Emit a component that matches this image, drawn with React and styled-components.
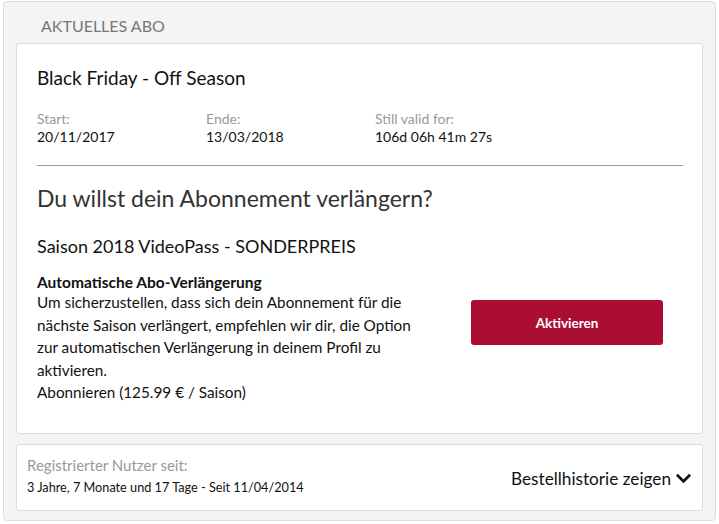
import styled, { createGlobalStyle } from "styled-components";
import { FaChevronDown } from "react-icons/fa";

const GlobalStyle = createGlobalStyle`
  * {
    box-sizing: border-box;
  }
  body {
    margin: 0;
    background: #fff;
    font-family: Lato, "Noto Sans", sans-serif;
    color: #111;
  }
`;

const Page = styled.div`
  padding: 1px 4px 4px 3px;
`;

const Panel = styled.section`
  width: 713px;
  background: #f4f4f4;
  border: 1px solid #dedede;
  border-radius: 4px;
  padding: 0 12px 9px 12px;
`;

const PanelTitle = styled.h2`
  margin: 0;
  height: 41px;
  padding: 14px 0 0 25px;
  font-size: 16px;
  font-weight: 400;
  color: #777;
  text-transform: uppercase;
`;

const Card = styled.div`
  background: #fff;
  border: 1px solid #dcdcdc;
  border-radius: 3px;
  padding: ${(p) => p.$padding || "20px"};
  & + & {
    margin-top: 10px;
  }
`;

const SubTitle = styled.h3`
  margin: 0;
  font-size: 19px;
  font-weight: 400;
  color: #111;
  line-height: 26px;
`;

const Dates = styled.div`
  display: flex;
  margin-top: 19px;
  padding-bottom: 19px;
  border-bottom: 1px solid #9a9a9a;
`;

const DateCol = styled.div`
  width: 169px;
  font-size: 14px;
  line-height: 18px;
`;

const Label = styled.div`
  color: #999;
`;

const Value = styled.div`
  color: #111;
`;

const Question = styled.h3`
  margin: 17px 0 0;
  font-size: 23px;
  font-weight: 400;
  color: #333;
  line-height: 30px;
`;

const Product = styled.h4`
  margin: 21px 0 0;
  font-size: 18px;
  font-weight: 400;
  color: #111;
  line-height: 24px;
`;

const Offer = styled.div`
  display: flex;
  align-items: flex-start;
  margin-top: 15px;
`;

const OfferText = styled.div`
  width: 385px;
  font-size: 15.3px;
  line-height: 22.5px;
  color: #111;
`;

const Strong = styled.div`
  font-size: 15.5px;
  font-weight: 700;
  line-height: 18px;
`;

const ButtonCol = styled.div`
  flex: 1;
  display: flex;
  padding: 27px 0 0 49px;
`;

const Button = styled.button`
  width: 192px;
  height: 45px;
  background: #ab0e33;
  color: #fff;
  border: none;
  border-radius: 3px;
  font-family: Lato, "Noto Sans", sans-serif;
  font-size: 13.5px;
  font-weight: 700;
  cursor: pointer;
`;

const FooterRow = styled.div`
  display: flex;
  align-items: center;
  justify-content: space-between;
`;

const Since = styled.div`
  color: #999;
  font-size: 15px;
  line-height: 20px;
`;

const SinceValue = styled.div`
  font-size: 12.7px;
  line-height: 20px;
  margin-top: 2px;
  color: #111;
`;

const Toggle = styled.button`
  display: flex;
  align-items: center;
  gap: 4px;
  background: none;
  border: none;
  padding: 0;
  margin-top: 6px;
  font-family: Lato, "Noto Sans", sans-serif;
  font-size: 17.2px;
  color: #111;
  cursor: pointer;
  svg {
    width: 17px;
    height: 17px;
  }
`;

export default function App() {
  return (
    <>
      <GlobalStyle />
      <Page>
        <Panel>
          <PanelTitle>Aktuelles Abo</PanelTitle>
          <Card $padding="21px 19px 29px 20px">
            <SubTitle>Black Friday - Off Season</SubTitle>
            <Dates>
              <DateCol>
                <Label>Start:</Label>
                <Value>20/11/2017</Value>
              </DateCol>
              <DateCol>
                <Label>Ende:</Label>
                <Value>13/03/2018</Value>
              </DateCol>
              <DateCol>
                <Label>Still valid for:</Label>
                <Value>106d 06h 41m 27s</Value>
              </DateCol>
            </Dates>
            <Question>Du willst dein Abonnement verlängern?</Question>
            <Product>Saison 2018 VideoPass - SONDERPREIS</Product>
            <Offer>
              <OfferText>
                <Strong>Automatische Abo-Verlängerung</Strong>
                Um sicherzustellen, dass sich dein Abonnement für die nächste
                Saison verlängert, empfehlen wir dir, die Option zur
                automatischen Verlängerung in deinem Profil zu aktivieren.
                <div>Abonnieren (125.99 € / Saison)</div>
              </OfferText>
              <ButtonCol>
                <Button>Aktivieren</Button>
              </ButtonCol>
            </Offer>
          </Card>
          <Card $padding="10px 10px 13px 10px">
            <FooterRow>
              <div>
                <Since>Registrierter Nutzer seit:</Since>
                <SinceValue>3 Jahre, 7 Monate und 17 Tage - Seit 11/04/2014</SinceValue>
              </div>
              <Toggle>
                Bestellhistorie zeigen <FaChevronDown />
              </Toggle>
            </FooterRow>
          </Card>
        </Panel>
      </Page>
    </>
  );
}
